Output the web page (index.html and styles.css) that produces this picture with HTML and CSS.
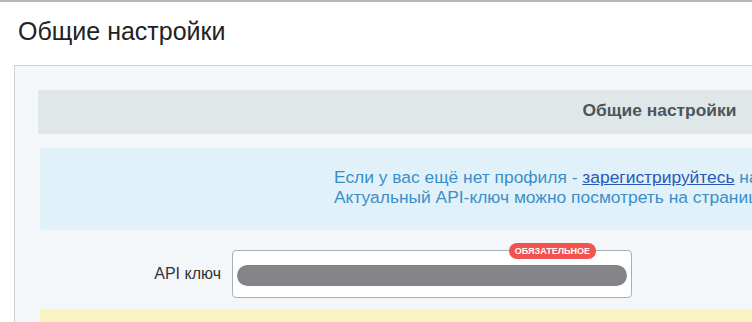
FILE: index.html
```html
<!DOCTYPE html>
<html lang="ru">
<head>
    <meta charset="UTF-8">
    <meta name="viewport" content="width=device-width, initial-scale=1.0">
    <title>Общие настройки</title>
    <link rel="stylesheet" href="styles.css">
</head>
<body>
    <div class="page">
        <h1 class="page-title">Общие настройки</h1>

        <div class="panel">
            <div class="panel-header">Общие настройки</div>

            <div class="info">
                Если у вас ещё нет профиля - <a href="#">зарегистрируйтесь</a> на сайте сервиса.<br>
                Актуальный API-ключ можно посмотреть на странице настроек профиля.
            </div>

            <div class="form-row">
                <label class="form-label" for="api-key">API ключ</label>
                <div class="field">
                    <span class="badge">Обязательное</span>
                    <div class="key-mask" id="api-key"></div>
                </div>
            </div>

            <div class="notice"></div>
        </div>
    </div>
</body>
</html>
```

FILE: styles.css
```css
:root {
    --panel-background: #f4f7f9;
    --panel-border: #c9d3d9;
    --header-background: #e0e7e9;
    --header-text: #4b555b;
    --info-background: #e1f1f9;
    --info-text: #3b8fc9;
    --link-color: #2b58b6;
    --danger-color: #f2534e;
}

html, body {
    margin: 0;
    padding: 0;
    overflow: hidden;
}

body {
    font-family: "Liberation Sans", Arial, sans-serif;
    color: #333;
    background: #fff;
    border-top: 2px solid #b3b7ba;
}

.page {
    height: 320px;
    overflow: hidden;
}

.page-title {
    font-size: 25px;
    font-weight: normal;
    color: #222;
    margin: 15px 0 19px 18px;
}

.panel {
    width: 1290px;
    height: 258px;
    box-sizing: border-box;
    overflow: hidden;
    margin-left: 14px;
    padding: 24px 23px 0;
    background: var(--panel-background);
    border: 1px solid var(--panel-border);
    border-right: none;
    border-bottom: none;
}

.panel-header {
    background: var(--header-background);
    color: var(--header-text);
    font-size: 17.4px;
    font-weight: bold;
    text-align: center;
    line-height: 40px;
    padding-bottom: 4px;
}

.info {
    margin: 14px 2px 0;
    padding: 19px 0 23px 294px;
    background: var(--info-background);
    color: var(--info-text);
    font-size: 17.4px;
    line-height: 20px;
    white-space: nowrap;
    border-radius: 3px;
}

.info a {
    color: var(--link-color);
}

.form-row {
    display: grid;
    grid-template-columns: 183px 400px;
    column-gap: 11px;
    align-items: center;
    margin-top: 20px;
}

.form-label {
    text-align: right;
    font-size: 16px;
    color: #333;
}

.field {
    position: relative;
    background: #fff;
    border: 1px solid #a9aeb3;
    border-radius: 4px;
    padding: 14px 4px 11px;
}

.key-mask {
    height: 21px;
    border-radius: 11px;
    background: #848588;
}

.badge {
    position: absolute;
    top: -8px;
    right: 35px;
    height: 16px;
    line-height: 16px;
    padding: 0 6px;
    border-radius: 8px;
    background: var(--danger-color);
    color: #fff;
    font-size: 9px;
    font-weight: bold;
    text-transform: uppercase;
}

.notice {
    margin: 11px 2px 0;
    height: 40px;
    background: #f9f3c2;
    border-radius: 3px;
}
```
